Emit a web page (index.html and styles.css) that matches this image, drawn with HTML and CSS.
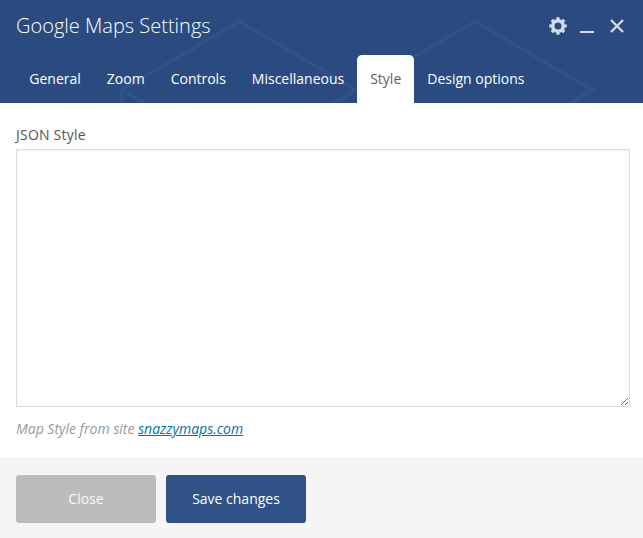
FILE: index.html
```html
<!DOCTYPE html>
<html lang="en">
<head>
<meta charset="utf-8">
<title>Google Maps Settings</title>
<link rel="stylesheet" href="styles.css">
</head>
<body>
<div class="panel">
  <header class="header">
    <svg class="pattern" width="643" height="103" viewBox="0 0 643 103" fill="none" stroke="#305287" stroke-width="3.500" aria-hidden="true">
      <path d="M121.500 110V90L239.500 21.500L356.500 90L300 123M121.500 90L170 118"/>
      <path d="M357 90L475 21.500L592.500 90L536 123"/>
    </svg>
    <div class="heading">
      <h1 class="title">Google Maps Settings</h1>
      <div class="controls">
        <button class="control" aria-label="Settings">
          <svg width="18" height="18" viewBox="-9 -9 18 18"><circle r="5.300" fill="none" stroke="currentColor" stroke-width="3.600"/><path stroke="currentColor" stroke-width="3.200" d="M0-8.800v3M0 5.800v3M-8.800 0h3M5.800 0h3M-6.200-6.200l2 2M4.200 4.200l2 2M6.200-6.200l-2 2M-4.200 4.200l-2 2"/></svg>
        </button>
        <button class="control" aria-label="Minimize">
          <svg width="14" height="18" viewBox="0 0 14 18"><path fill="currentColor" d="M0 14h14v2H0z"/></svg>
        </button>
        <button class="control" aria-label="Close panel">
          <svg width="14" height="18" viewBox="0 0 14 18"><path stroke="currentColor" stroke-width="2.300" d="M1 3l12 12M13 3L1 15"/></svg>
        </button>
      </div>
    </div>
    <nav class="tabs">
      <button class="tab">General</button>
      <button class="tab">Zoom</button>
      <button class="tab">Controls</button>
      <button class="tab">Miscellaneous</button>
      <button class="tab active">Style</button>
      <button class="tab">Design options</button>
    </nav>
  </header>
  <main class="content">
    <label class="label" for="json-style">JSON Style</label>
    <textarea class="field" id="json-style"></textarea>
    <p class="description">Map Style from site <a href="#">snazzymaps.com</a></p>
  </main>
  <footer class="footer">
    <button class="button">Close</button>
    <button class="button primary">Save changes</button>
  </footer>
</div>
</body>
</html>
```
FILE: styles.css
```css
* {
  box-sizing: border-box;
}

body {
  margin: 0;
  background: #fff;
  font: 14px/20px "Open Sans", "Noto Sans", sans-serif;
}

button {
  margin: 0;
  padding: 0;
  border: 0;
  background: none;
  color: inherit;
  font: inherit;
}

.panel {
  display: flex;
  flex-direction: column;
  height: 538px;
}

.header {
  position: relative;
  height: 103px;
  background: #2b4b80;
  color: #fff;
}

.pattern {
  position: absolute;
  inset: 0;
}

.heading {
  position: relative;
  display: flex;
  justify-content: space-between;
  height: 55px;
  padding: 12px 19px 0 16px;
}

.title {
  margin: 0;
  font-size: 20px;
  font-weight: 300;
  line-height: 28px;
}

.controls {
  display: flex;
  gap: 14px;
  padding-top: 5px;
  color: #d5dbe6;
}

.control,
.control svg {
  display: block;
  height: 18px;
}

.control:first-child {
  margin-right: -1px;
}

.control:last-child {
  margin-left: 2px;
}

.tabs {
  position: relative;
  display: flex;
  padding-left: 16.3px;
}

.tab {
  height: 48px;
  padding: 0 13px;
  border-radius: 5px 5px 0 0;
  white-space: nowrap;
}

.tab.active {
  background: #fff;
  color: #5e5e5e;
}

.content {
  flex: 1;
  padding: 22px 13px 0 16px;
}

.label {
  display: block;
  margin-bottom: 4px;
  color: #555;
  font-weight: 500;
  letter-spacing: 0.22px;
}

.field {
  display: block;
  width: 100%;
  height: 258px;
  border: 1px solid #ddd;
  box-shadow: inset 0 1px 2px rgba(0, 0, 0, 0.07);
  outline: 0;
}

.description {
  margin: 12px 0 0;
  color: #999;
  font-style: italic;
}

.description a {
  color: #0073aa;
}

.footer {
  display: flex;
  gap: 10px;
  height: 81px;
  padding: 18px 16px;
  background: #f5f5f5;
}

.button {
  width: 140px;
  height: 48px;
  border-radius: 3px;
  background: #bcbcbc;
  color: #f8f8f8;
}

.button.primary {
  background: #305287;
  color: #fff;
}
```
